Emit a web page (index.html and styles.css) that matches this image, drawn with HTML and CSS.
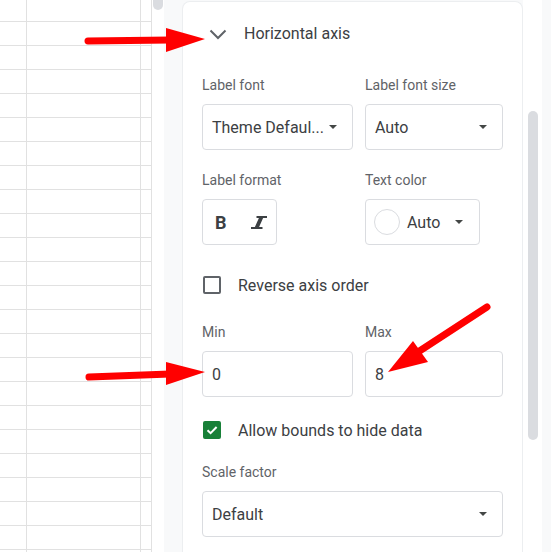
FILE: index.html
```html
<!DOCTYPE html>
<html lang="en">
<head>
    <meta charset="UTF-8">
    <meta name="viewport" content="width=device-width, initial-scale=1.0">
    <title>Chart editor - Horizontal axis</title>
    <link rel="stylesheet" href="styles.css">
</head>
<body>

    <!-- spreadsheet grid -->
    <div class="sheet"></div>
    <div class="sheet-scroll"><div class="thumb"></div></div>

    <!-- chart editor sidebar -->
    <div class="sidebar">
        <div class="card">
            <div class="section-head">
                <svg class="chevron" width="18" height="12" viewBox="0 0 18 12">
                    <path d="M1.5 2.5 L9 10 L16.5 2.5" fill="none" stroke="#5f6368" stroke-width="2"/>
                </svg>
                <span>Horizontal axis</span>
            </div>

            <div class="row first">
                <div class="field">
                    <div class="label">Label font</div>
                    <div class="box select"><span>Theme Defaul...</span><i class="caret"></i></div>
                </div>
                <div class="field">
                    <div class="label">Label font size</div>
                    <div class="box select"><span>Auto</span><i class="caret"></i></div>
                </div>
            </div>

            <div class="row">
                <div class="field">
                    <div class="label">Label format</div>
                    <div class="box format">
                        <b>B</b>
                        <svg class="italic" width="16" height="13" viewBox="0 0 16 13">
                            <path d="M5.5 0h10.5v2h-3.9l-4 9H11.5V13H0v-2h3.9l4-9H5.5z" fill="#3c4043"/>
                        </svg>
                    </div>
                </div>
                <div class="field">
                    <div class="label">Text color</div>
                    <div class="box color"><span class="swatch"></span><span>Auto</span><i class="caret"></i></div>
                </div>
            </div>

            <label class="check">
                <span class="checkbox"></span>
                <span>Reverse axis order</span>
            </label>

            <div class="row bounds">
                <div class="field">
                    <div class="label">Min</div>
                    <div class="box input">0</div>
                </div>
                <div class="field">
                    <div class="label">Max</div>
                    <div class="box input">8</div>
                </div>
            </div>

            <label class="check checked">
                <span class="checkbox">
                    <svg width="14" height="14" viewBox="0 0 14 14"><path d="M2.5 7.2 L5.6 10.2 L11.6 4" fill="none" stroke="#fff" stroke-width="2"/></svg>
                </span>
                <span>Allow bounds to hide data</span>
            </label>

            <div class="field scale">
                <div class="label">Scale factor</div>
                <div class="box select wide"><span>Default</span><i class="caret"></i></div>
            </div>
        </div>
        <div class="track"><div class="thumb"></div></div>
    </div>

    <!-- annotation arrows -->
    <svg class="arrows" width="551" height="552" viewBox="0 0 551 552">
        <line x1="88" y1="41" x2="170" y2="40" stroke="#f00" stroke-width="7" stroke-linecap="round"/>
        <polygon points="166,28 205,39 166,52" fill="#f00"/>
        <line x1="89" y1="377" x2="170" y2="374" stroke="#f00" stroke-width="7" stroke-linecap="round"/>
        <polygon points="166,362 205,372 166,385" fill="#f00"/>
        <line x1="487" y1="307" x2="418" y2="352" stroke="#f00" stroke-width="7" stroke-linecap="round"/>
        <polygon points="413,341 388,372 428,362" fill="#f00"/>
    </svg>

</body>
</html>
```

FILE: styles.css
```css
body {
    margin: 0;
    height: 552px;
    overflow: hidden;
    display: flex;
    position: relative;
    font-family: Roboto, "Liberation Sans", Arial, sans-serif;
    color: #3c4043;
    background: #fff;
}
.sheet {
    width: 152px;
    flex-shrink: 0;
    background-color: #fff;
    background-image:
        linear-gradient(to right, transparent 26px, #e1e1e1 26px, #e1e1e1 27px, transparent 27px,
            transparent 140px, #e1e1e1 140px, #e1e1e1 141px, transparent 141px,
            transparent 151px, #e1e1e1 151px),
        linear-gradient(to bottom, #e1e1e1 1px, transparent 1px);
    background-size: 100% 100%, 100% 24px;
    background-position: 0 0, 0 21px;
}
.sheet-scroll {
    width: 12px;
    flex-shrink: 0;
    background: #fff;
}
.sheet-scroll .thumb {
    margin-left: 1px;
    width: 10px;
    height: 10px;
    background: #dadce0;
    border-radius: 0 0 5px 5px;
}
.sidebar {
    flex: 1;
    display: flex;
    background: #f8f9fa;
}
.card {
    margin: 1px 0 0 18px;
    width: 341px;
    box-sizing: border-box;
    padding: 22px 19px 0 19px;
    background: #fff;
    border: 1px solid #eceef0;
    border-bottom: none;
    border-radius: 8px 8px 0 0;
}
.track {
    width: 19px;
    background: #fff;
}
.track .thumb {
    margin: 111px 0 0 5px;
    width: 10px;
    height: 329px;
    background: #dadce0;
    border-radius: 5px;
}
.section-head {
    display: flex;
    align-items: center;
    height: 20px;
    padding-left: 7px;
    font-size: 16px;
    line-height: 20px;
    color: #3c4043;
}
.chevron {
    margin-right: 17px;
}
.row {
    display: grid;
    grid-template-columns: 151px 138px;
    column-gap: 12px;
    margin-top: 22px;
}
.row.first {
    margin-top: 33px;
}
.row.bounds {
    margin-top: 27px;
}
.label {
    font-size: 14px;
    line-height: 16px;
    color: #5f6368;
    margin-bottom: 11px;
}
.box {
    height: 46px;
    box-sizing: border-box;
    border: 1px solid #dadce0;
    border-radius: 4px;
    display: flex;
    align-items: center;
    font-size: 16px;
    color: #3c4043;
}
.select {
    justify-content: space-between;
    padding: 0 15px 0 9px;
}
.input {
    padding-left: 9px;
}
.caret {
    width: 0;
    height: 0;
    border-left: 4.5px solid transparent;
    border-right: 4.5px solid transparent;
    border-top: 4.5px solid #444746;
}
.format {
    width: 75px;
    padding-left: 12px;
}
.format b {
    font-size: 18px;
    font-weight: 700;
}
.italic {
    margin-left: 24px;
}
.color {
    width: 115px;
    padding: 0 16px 0 8px;
}
.swatch {
    width: 26px;
    height: 26px;
    box-sizing: border-box;
    border: 1px solid #dadce0;
    border-radius: 50%;
    margin-right: 7px;
}
.color .caret {
    margin-left: auto;
}
.check {
    display: flex;
    align-items: center;
    height: 24px;
    margin-top: 28px;
    font-size: 16px;
    color: #3c4043;
}
.checkbox {
    width: 18px;
    height: 18px;
    box-sizing: border-box;
    margin-left: 1px;
    margin-right: 17px;
    border: 2px solid #5f6368;
    border-radius: 2px;
    display: flex;
    align-items: center;
    justify-content: center;
}
.check.checked {
    margin-top: 21px;
}
.checked .checkbox {
    background: #188038;
    border-color: #188038;
}
.scale {
    margin-top: 22px;
}
.wide {
    width: 301px;
}
.arrows {
    position: absolute;
    left: 0;
    top: 0;
    pointer-events: none;
}
```
